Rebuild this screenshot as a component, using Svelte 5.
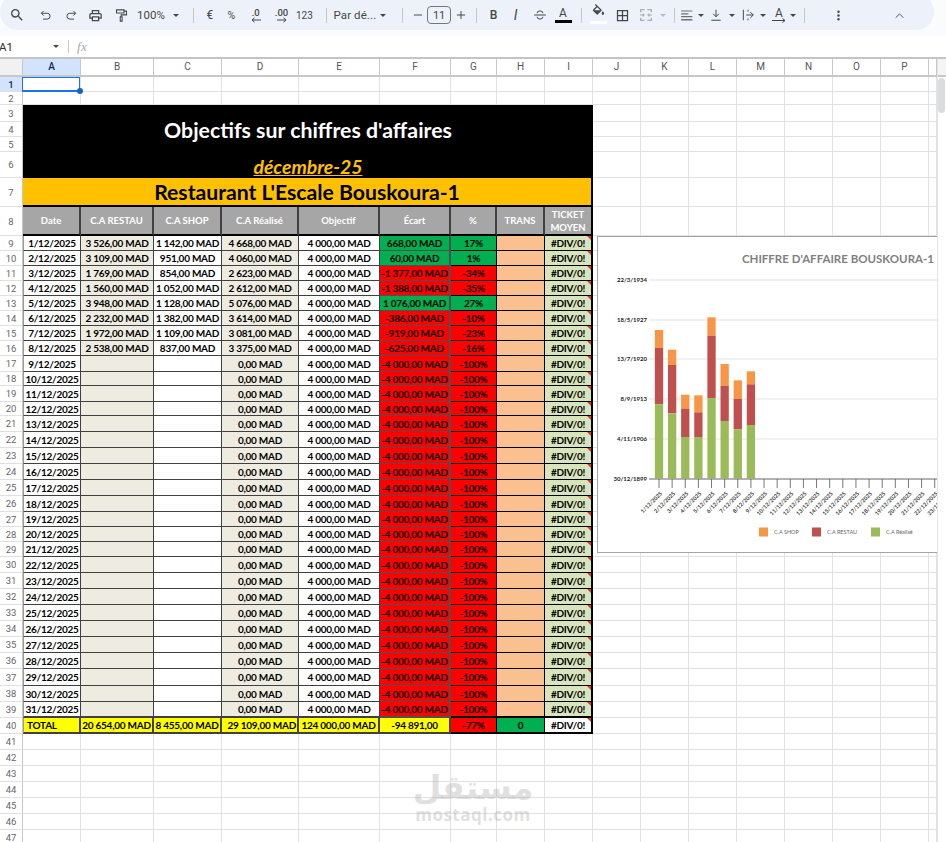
<script>
  const tools = [
    { c: 20, k: 'icon', size: 16, f: 'M15.5 14h-.79l-.28-.27A6.471 6.471 0 0 0 16 9.5 6.5 6.5 0 1 0 9.5 16c1.61 0 3.09-.59 4.23-1.57l.27.28v.79l5 4.99L20.49 19l-4.99-5zm-6 0C7.01 14 5 11.99 5 9.5S7.01 5 9.5 5 14 7.01 14 9.5 11.99 14 9.5 14z' },
    { c: 47, k: 'icon', size: 14, s: 'M8 5 4 9l4 4M4 9h10a5 5 0 0 1 0 10H7' },
    { c: 70, k: 'icon', size: 14, s: 'M16 5l4 4-4 4M20 9H10a5 5 0 0 0 0 10h7' },
    { c: 95.5, k: 'icon', size: 15, f: 'M19 8h-1V3H6v5H5c-1.66 0-3 1.34-3 3v6h4v4h12v-4h4v-6c0-1.66-1.34-3-3-3zM8 5h8v3H8V5zm8 12v2H8v-4h8v2zm2-2v-2H6v2H4v-4c0-.55.45-1 1-1h14c.55 0 1 .45 1 1v4h-2z' },
    { c: 119, k: 'icon', size: 15, s: 'M4 3h12v5H4zM16 5h4v6h-8.500v3M10 14h3v7h-3z' },
    { c: 152.500, k: 'text', t: '100%', cls: 'label' },
    { c: 180, k: 'caret' },
    { c: 192.500, k: 'sep' },
    { c: 207.500, k: 'text', t: '€', cls: 'sym' },
    { c: 232, k: 'text', t: '%', cls: 'sym small' },
    { c: 254, k: 'decimal', t: '.0', dir: -1 },
    { c: 283, k: 'decimal', t: '.00', dir: 1 },
    { c: 306, k: 'text', t: '123', cls: 'num' },
    { c: 322.500, k: 'sep' },
    { c: 354.500, k: 'text', t: 'Par dé...', cls: 'label' },
    { c: 388, k: 'caret' },
    { c: 402.500, k: 'sep' },
    { c: 415, k: 'icon', size: 14, f: 'M5 11.200h14v1.600H5z' },
    { c: 439, k: 'box', t: '11' },
    { c: 463.500, k: 'icon', size: 14, f: 'M11.200 5h1.600v6.200H19v1.600h-6.200V19h-1.600v-6.200H5v-1.600h6.200z' },
    { c: 476.500, k: 'sep' },
    { c: 491, k: 'text', t: 'B', cls: 'bold' },
    { c: 515.500, k: 'text', t: 'I', cls: 'ital' },
    { c: 540.500, k: 'icon', size: 14, s: 'M7 9a5 4 0 0 1 10 0M7 15a5 4 0 0 0 10 0M2 12h20' },
    { c: 565, k: 'color', t: 'A' },
    { c: 581.500, k: 'sep' },
    { c: 596, k: 'fill', f: 'M16.56 8.94 7.62 0 6.21 1.41l2.38 2.38-5.15 5.15c-.59.59-.59 1.54 0 2.12l5.5 5.5c.29.29.68.44 1.06.44s.77-.15 1.06-.44l5.5-5.5c.59-.58.59-1.53 0-2.12zM5.21 10 10 5.21 14.79 10H5.21zM19 11.500s-2 2.170-2 3.500c0 1.100.9 2 2 2s2-.9 2-2c0-1.330-2-3.500-2-3.500z' },
    { c: 622, k: 'icon', size: 15, f: 'M3 3v18h18V3H3zm8 16H5v-6h6v6zm0-8H5V5h6v6zm8 8h-6v-6h6v6zm0-8h-6V5h6v6z' },
    { c: 648.500, k: 'icon', size: 16, dim: true, f: 'M3 3h7v2H5v3H3zM14 3h7v5h-2V5h-5zM3 16h2v3h5v2H3zM19 16h2v5h-7v-2h5z', s: 'M3 12h6M7 10l2 2-2 2M21 12h-6M17 10l-2 2 2 2' },
    { c: 665, k: 'caret', dim: true },
    { c: 672.500, k: 'sep' },
    { c: 687, k: 'icon', size: 15, lite: true, f: 'M2 3h20v2H2zM2 8h13v2H2zM2 13h20v2H2zM2 18h20v3H2z' },
    { c: 699.500, k: 'caret' },
    { c: 717, k: 'icon', size: 14, s: 'M12 3v12M7 10l5 5 5-5M4 21h16' },
    { c: 731, k: 'caret' },
    { c: 749, k: 'icon', size: 14, s: 'M4 3v18M9 12h12M16 7l5 5-5 5M12 3v3M12 18v3' },
    { c: 761.500, k: 'caret' },
    { c: 780, k: 'rotate', t: 'A' },
    { c: 794, k: 'caret' },
    { c: 803.500, k: 'sep' },
    { c: 818, k: 'icon', size: 15, f: 'M12 8a2 2 0 1 0 0-4 2 2 0 0 0 0 4zm0 2a2 2 0 1 0 0 4 2 2 0 0 0 0-4zm0 6a2 2 0 1 0 0 4 2 2 0 0 0 0-4z' },
    { c: 912.500, k: 'icon', size: 13, s: 'M5 16l7-7 7 7' }
  ];
  const toolbar = tools.map((t, i) => {
    const left = i === 0 ? 0 : (tools[i - 1].c + t.c) / 2;
    const right = i === tools.length - 1 ? 934 : (t.c + tools[i + 1].c) / 2;
    return { ...t, w: right - left };
  });

  const columns = ['A','B','C','D','E','F','G','H','I','J','K','L','M','N','O','P',''];
  const lines = [77,92,105,122,137,152,178,207,236,251,266,281,296,311,326,341,356,372,386,402,416,432,448,464,480,496,512,527,542,557,573,589,605,621,637,653,669,686,702,718,734,750,766,782,798,814,830,846];
  const rowNos = lines.slice(0, -1).map((_, i) => i + 1);
  const rowTemplate = '18px ' + lines.slice(1).map((l, i) => `${l - lines[i]}px`).join(' ');

  const filled = [
    ['3 526,00 MAD','1 142,00 MAD','4 668,00 MAD','668,00 MAD','17%'],
    ['3 109,00 MAD','951,00 MAD','4 060,00 MAD','60,00 MAD','1%'],
    ['1 769,00 MAD','854,00 MAD','2 623,00 MAD','-1 377,00 MAD','-34%'],
    ['1 560,00 MAD','1 052,00 MAD','2 612,00 MAD','-1 388,00 MAD','-35%'],
    ['3 948,00 MAD','1 128,00 MAD','5 076,00 MAD','1 076,00 MAD','27%'],
    ['2 232,00 MAD','1 382,00 MAD','3 614,00 MAD','-386,00 MAD','-10%'],
    ['1 972,00 MAD','1 109,00 MAD','3 081,00 MAD','-919,00 MAD','-23%'],
    ['2 538,00 MAD','837,00 MAD','3 375,00 MAD','-625,00 MAD','-16%']
  ];
  const dayOf = (n) => n - 8;
  const rowData = (n) => {
    const d = filled[n - 9] || ['', '', '0,00 MAD', '-4 000,00 MAD', '-100%'];
    return { date: `${dayOf(n)}/12/2025`, restau: d[0], shop: d[1], real: d[2], ecart: d[3], pct: d[4], good: !d[3].startsWith('-') };
  };
  const heads = [['Date','h-date'],['C.A RESTAU'],['C.A SHOP'],['C.A Réalisé'],['Objectif'],['Écart'],['%'],['TRANS']];

  const tails = [0,1,2,3,4,5,6,7];
  const nine = [0,1,2,3,4,5,6,7,8];

  const yLabels = [['22/3/1934',280],['18/5/1927',320],['13/7/1920',359],['8/9/1913',399],['4/11/1906',439]];
  const bars = [[300,354,523],[359,405,550],[494,536,621],[496,547,621],[262,317,504],[402,468,573],[451,507,598],[424,463,585]];
  const zy = (z) => 230 + z / 3 - 236;
  const barX = (i) => 659 - 597 + 13.130 * i;
  const axisDays = Array.from({ length: 24 }, (_, i) => i);
  const barRects = bars.map((b, i) => ({ x: barX(i) - 4.150, a: zy(b[0]), b: zy(b[1]), c: zy(b[2]), d: zy(746) }));
</script>

{#snippet emptyTail()}
  {#each tails as t (t)}<div class="g"></div>{/each}
{/snippet}

{#snippet glyph(t)}
  <svg width={t.size} height={t.size} viewBox="0 0 24 24" class:dim={t.dim} class:lite={t.lite}>
    {#if t.f}<path d={t.f} class="pf" />{/if}
    {#if t.s}<path d={t.s} class="ps" />{/if}
  </svg>
{/snippet}

<div class="page">
  <div class="band">
    <div class="toolbar">
      {#each toolbar as t}
        <div class="slot" style:width="{t.w}px">
          {#if t.k === 'icon'}
            {@render glyph(t)}
          {:else if t.k === 'text'}
            <span class={t.cls}>{t.t}</span>
          {:else if t.k === 'caret'}
            <i class="caret" class:dimcaret={t.dim}></i>
          {:else if t.k === 'sep'}
            <i class="sep"></i>
          {:else if t.k === 'box'}
            <span class="box">{t.t}</span>
          {:else if t.k === 'color'}
            <span class="stack"><span class="colorA">{t.t}</span><i class="bar black"></i></span>
          {:else if t.k === 'fill'}
            <span class="stack"><svg width="15" height="15" viewBox="0 0 24 24" class="bucket"><path d={t.f} class="pf" /></svg><i class="bar whitebar"></i></span>
          {:else if t.k === 'rotate'}
            <span class="stack rot">
              <span class="colorA">{t.t}</span>
              <svg width="16" height="5" viewBox="0 0 16 5"><path d="M1 2.500h13M11.500 .5l2.500 2-2.500 2" class="thin" /></svg>
            </span>
          {:else if t.k === 'decimal'}
            <span class="stack dec">
              <span>{t.t}</span>
              <svg width="14" height="6" viewBox="0 0 14 6">
                {#if t.dir < 0}
                  <path d="M12 3H3M5.500 .8 3 3l2.500 2.200" class="thin" />
                {:else}
                  <path d="M2 3h9M8.500 .8 11 3 8.500 5.200" class="thin" />
                {/if}
              </svg>
            </span>
          {/if}
        </div>
      {/each}
    </div>
  </div>

  <div class="formula">
    <span class="ref">A1</span>
    <i class="caret refcaret"></i>
    <i class="fsep"></i>
    <span class="fx">fx</span>
  </div>

  <div class="sheet">
    <div class="canvas">
      <div class="grid" style:grid-template-rows={rowTemplate}>
        <div class="corner"></div>
        {#each columns as c, i}
          <div class="colhead" class:on={i === 0}>{c}</div>
        {/each}

        {#each rowNos as n (n)}
          <div class="rowhead" class:on={n === 1}>{n}</div>
          {#if n === 1}
            <div class="g a1"><span class="sel"><i class="dot"></i></span></div>
            {#each tails as t (t)}<div class="g"></div>{/each}
            {@render emptyTail()}
          {:else if n === 2}
            {#each nine as t (t)}<div class="g"></div>{/each}
            {@render emptyTail()}
          {:else if n === 3}
            <div class="title"><span>Objectifs sur chiffres d'affaires</span></div>
            {@render emptyTail()}
          {:else if n === 4 || n === 5}
            {@render emptyTail()}
          {:else if n === 6}
            <div class="month"><span>décembre-25</span></div>
            {@render emptyTail()}
          {:else if n === 7}
            <div class="resto">Restaurant L'Escale Bouskoura-1</div>
            {@render emptyTail()}
          {:else if n === 8}
            {#each heads as h (h[0])}
              <div class="th">{h[0]}</div>
            {/each}
            <div class="th last"><span>TICKET<br />MOYEN</span></div>
            {@render emptyTail()}
          {:else if n >= 9 && n <= 39}
            {@const d = rowData(n)}
            <div class="t date" class:thick={n === 39}>{d.date}</div>
            <div class="t beige" class:thick={n === 39}>{d.restau}</div>
            <div class="t" class:thick={n === 39}>{d.shop}</div>
            <div class="t beige" class:thick={n === 39}>{d.real}</div>
            <div class="t" class:thick={n === 39}>4 000,00 MAD</div>
            <div class="t ec" class:ok={d.good} class:thick={n === 39}>{d.ecart}</div>
            <div class="t bk" class:ok={d.good} class:bad={!d.good} class:thick={n === 39}>{d.pct}</div>
            <div class="t bk peach" class:thick={n === 39}></div>
            <div class="t bk ticket" class:thick={n === 39}>#DIV/0!<i class="flag"></i></div>
            {@render emptyTail()}
          {:else if n === 40}
            <div class="t tot first">TOTAL</div>
            <div class="t tot">20 654,00 MAD</div>
            <div class="t tot">8 455,00 MAD</div>
            <div class="t tot pushr">29 109,00 MAD</div>
            <div class="t tot">124 000,00 MAD</div>
            <div class="t tot">-94 891,00</div>
            <div class="t bk bad botm">-77%</div>
            <div class="t bk ok botm">0</div>
            <div class="t bk wcell botm">#DIV/0!<i class="flag"></i></div>
            {@render emptyTail()}
          {:else}
            {#each nine as t (t)}<div class="g"></div>{/each}
            {@render emptyTail()}
          {/if}
        {/each}
      </div>

      <div class="chart">
        <svg width="340" height="317" viewBox="0 0 340 317">
          <text x="337" y="27" text-anchor="end" class="ctitle">CHIFFRE D'AFFAIRE BOUSKOURA-1</text>
          {#each yLabels as l (l[0])}
            <line x1="52" x2="340" y1={l[1] - 236} y2={l[1] - 236} class="gl" />
            <text x="50" y={l[1] - 234} text-anchor="end" class="yl">{l[0]}</text>
          {/each}
          <text x="50" y="245" text-anchor="end" class="yl">30/12/1899</text>
          {#each barRects as b, i (i)}
            <rect x={b.x} y={b.a} width="8.300" height={b.b - b.a} fill="#f79646" />
            <rect x={b.x} y={b.b} width="8.300" height={b.c - b.b} fill="#c0504d" />
            <rect x={b.x} y={b.c} width="8.300" height={b.d - b.c} fill="#9bbb59" />
          {/each}
          <line x1="52" x2="340" y1="243" y2="243" class="axis" />
          {#each axisDays as d (d)}
            <line x1={barX(d)} x2={barX(d)} y1="243" y2="252" class="tick" />
            <text transform="translate({barX(d) + 3.500} 258) rotate(-45)" text-anchor="end" class="xl">{d + 1}/12/2025</text>
          {/each}
          <rect x="162" y="291.500" width="9" height="9" fill="#f79646" />
          <text x="177" y="298" class="lg">C.A SHOP</text>
          <rect x="215" y="291.500" width="9" height="9" fill="#c0504d" />
          <text x="230" y="298" class="lg">C.A RESTAU</text>
          <rect x="274" y="291.500" width="9" height="9" fill="#9bbb59" />
          <text x="289" y="298" class="lg">C.A Réalisé</text>
        </svg>
      </div>

      <div class="mark">
        <span class="ar" lang="ar" dir="rtl">مستقل</span>
        <span class="lat">mostaql.com</span>
      </div>
    </div>
    <div class="vscroll">
      <div class="vtop"></div>
      <div class="thumb"></div>
    </div>
  </div>
</div>

<style>
  :global(body) { margin: 0; background: #fff; overflow: hidden; }
  .page { width: 946px; height: 842px; overflow: hidden; font-family: Roboto, sans-serif; color: #444746; background: #fff; }

  .band { height: 36px; background: #f9fbfd; overflow: hidden; }
  .toolbar { display: flex; align-items: center; width: 934px; height: 36px; margin-top: -6px; padding-top: 6px; box-sizing: border-box; background: #edf2fa; border-radius: 18px; }
  .slot { display: flex; align-items: center; justify-content: center; flex: none; height: 30px; white-space: nowrap; }
  .pf { fill: #444746; }
  .ps { fill: none; stroke: #444746; stroke-width: 1.700; }
  .thin { fill: none; stroke: #444746; stroke-width: 1; }
  .dim { opacity: .38; }
  .lite { opacity: .75; }
  .label { font-size: 11.500px; letter-spacing: .1px; }
  .sym { font-size: 12px; }
  .small { font-size: 10.500px; }
  .num { font-size: 10px; }
  .bold { font-size: 12px; font-weight: 500; }
  .ital { font: italic 400 14px Roboto, sans-serif; }
  .caret { display: block; width: 0; height: 0; border-left: 3.500px solid transparent; border-right: 3.500px solid transparent; border-top: 3.500px solid #444746; }
  .dimcaret { border-top-color: #b9bcbf; }
  .sep { display: block; width: 1px; height: 15px; background: #c7c7c7; }
  .box { display: flex; align-items: center; justify-content: center; width: 24px; height: 16px; border: 1px solid #747775; border-radius: 4px; font-size: 11px; }
  .stack { display: flex; flex-direction: column; align-items: center; }
  .colorA { font-size: 12px; line-height: 12px; }
  .bar { display: block; width: 17px; height: 3px; margin-top: 1px; }
  .black { background: #000; }
  .whitebar { background: #fff; margin-top: 2px; }
  .bucket { margin-top: -2px; }
  .rot svg { margin-top: -1px; }
  .dec { font-size: 9.500px; line-height: 9px; font-weight: 500; margin-top: 1px; }

  .formula { display: flex; align-items: center; height: 21px; position: relative; background: #fff; font-size: 11.500px; color: #303030; }
  .ref { margin-left: -1px; width: 53px; }
  .refcaret { margin-left: 1px; }
  .fsep { display: block; width: 1px; height: 13px; margin-left: 9px; background: #c7c7c7; }
  .fx { margin-left: 8px; font: italic 13px "Liberation Serif", serif; color: #a9a9a9; letter-spacing: .5px; }

  .sheet { display: flex; height: 785px; border-top: 2px solid #c4c4c4; box-sizing: border-box; overflow: hidden; }
  .canvas { position: relative; width: 937px; height: 785px; flex: none; overflow: hidden; }
  .grid { display: grid; grid-template-columns: 23px 58px 73px 68px 77px 81px 71px 46px repeat(9, 48px) 8px; }

  .corner { background: #f1f1f1; border-right: 1px solid #c7c7c7; border-bottom: 2px solid #c7c7c7; box-sizing: border-box; }
  .colhead { display: flex; align-items: center; justify-content: center; box-sizing: border-box; border-right: 1px solid #c7c7c7; border-bottom: 2px solid #c7c7c7; font-size: 10px; color: #555; padding-bottom: 1px; }
  .rowhead { display: flex; align-items: center; justify-content: center; box-sizing: border-box; border-right: 1px solid #c7c7c7; border-bottom: 1px solid #e0e0e0; font-size: 9.500px; color: #666; background: #fff; }
  .on { background: #d3e3fd; color: #0b2a55; font-weight: 500; }
  .g { box-sizing: border-box; border-right: 1px solid #e1e1e1; border-bottom: 1px solid #e1e1e1; }
  .a1 { position: relative; }
  .sel { position: absolute; inset: 0 0 -1px -1px; border: 1px solid #1a73e8; border-bottom-width: 2px; z-index: 2; }
  .dot { position: absolute; right: -4px; bottom: -4px; width: 6px; height: 6px; border-radius: 50%; background: #1762c4; }

  .title, .month { grid-column: 2 / span 9; background: #000; display: flex; justify-content: center; font-family: Lato, sans-serif; font-weight: 700; box-sizing: border-box; }
  .title { grid-row-end: span 3; color: #fff; font-size: 21.300px; align-items: center; padding-top: 3px; }
  .month { color: #ffc000; font-size: 19.400px; font-style: italic; text-decoration: underline; align-items: center; padding-top: 3px; }
  .resto { grid-column: 2 / span 9; background: #ffc000; color: #000; font: 700 21.200px Lato, sans-serif; display: flex; align-items: center; justify-content: center; box-sizing: border-box; border-right: 2px solid #000; border-bottom: 2px solid #000; }
  .th { display: flex; align-items: center; justify-content: center; text-align: center; background: #a6a6a6; color: #fff; font: 700 9.500px/13px Lato, sans-serif; box-sizing: border-box; border-right: 2px solid #404040; border-bottom: 2px solid #000; }
  .th.last { border-right-color: #000; }

  .t { position: relative; display: flex; align-items: center; justify-content: center; box-sizing: border-box; overflow: hidden; white-space: nowrap; font: 700 10px/1 Lato, sans-serif; letter-spacing: -.25px; color: #000; background: #fff; border-right: 1px solid #404040; border-bottom: 1px solid #404040; }
  .date { border-left: 1px solid #9a9a9a; }
  .beige { background: #eeece1; }
  .ec { background: #f00; border-right: 2px solid #505050; border-bottom-color: #505050; }
  .ec.ok, .ok { background: #00b050; }
  .bad { background: #f00; }
  .bk { border-right-color: #000; border-bottom-color: #000; }
  .peach { background: #fac090; }
  .ticket { background: #d8e4bc; border-right: 2px solid #000; }
  .t.wcell { background: #fff; border-right: 2px solid #000; }
  .thick { border-bottom-width: 2px; }
  .tot { background: #ff0; border-right: 2px solid #404040; border-bottom: 2px solid #404040; }
  .first { justify-content: flex-start; padding-left: 3px; border-left: 1px solid #9a9a9a; }
  .pushr { justify-content: flex-end; padding-right: 1px; }
  .botm { border-bottom: 2px solid #000; }
  .flag { position: absolute; top: 0; right: 0; width: 0; height: 0; border-top: 4px solid #e0332a; border-left: 4px solid transparent; }

  .chart { position: absolute; left: 597px; top: 177px; width: 340px; height: 317px; box-sizing: border-box; background: #fff; border: 1.500px solid #a3a3a3; border-right: 0; overflow: hidden; }
  .chart svg { display: block; margin: -1px 0 0 -1px; }
  .ctitle { font: 700 11.500px Lato, sans-serif; fill: #7f7f7f; }
  .yl { font: 700 6px Lato, sans-serif; fill: #222; }
  .xl { font: 700 5.500px Lato, sans-serif; fill: #333; }
  .lg { font: 400 5.500px Lato, sans-serif; fill: #666; }
  .gl { stroke: #ececec; stroke-width: 1.500; }
  .axis { stroke: #9a9a9a; stroke-width: 1.500; }
  .tick { stroke: #555; stroke-width: .8; }

  .mark { position: absolute; left: 405px; top: 712px; width: 136px; display: flex; flex-direction: column; align-items: center; color: rgba(165, 165, 165, .35); pointer-events: none; }
  .ar { font: 700 33px/34px "DejaVu Sans", sans-serif; }
  .lat { font: 700 17px/20px "Open Sans", sans-serif; letter-spacing: .5px; }

  .vscroll { flex: 1; border-left: 1px solid #e3e3e3; box-sizing: border-box; }
  .vtop { height: 18px; background: #f4f4f4; border-bottom: 2px solid #c7c7c7; box-sizing: border-box; }
  .thumb { width: 7px; height: 35px; margin: 1px 0 0 0; background: #dadce0; border-radius: 4px; }
</style>
